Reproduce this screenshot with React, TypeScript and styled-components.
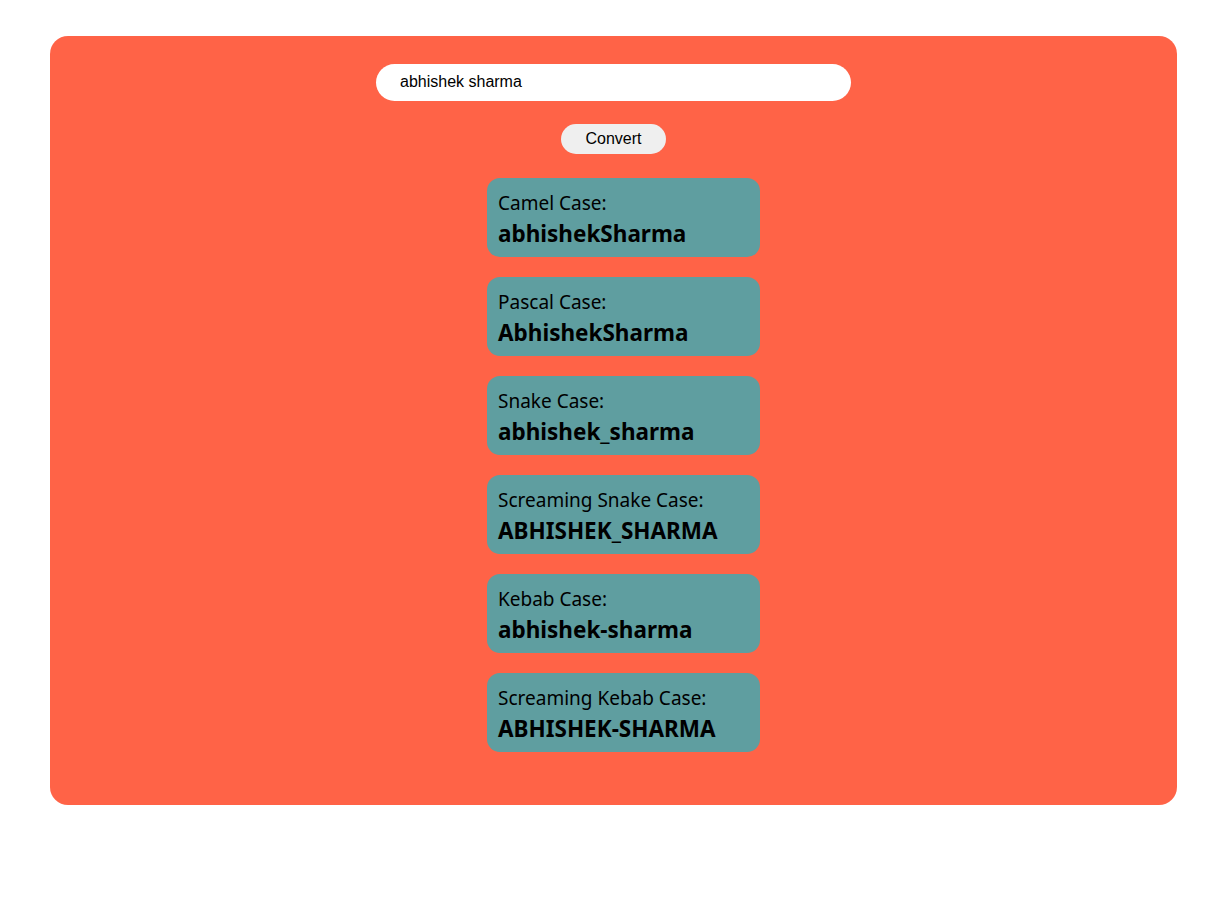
import React, { useState } from "react";
import styled, { createGlobalStyle } from "styled-components";

const Global = createGlobalStyle`
  html, body { margin: 0; padding: 0; background: #ffffff; }
  body { font-family: "Noto Sans", "Open Sans", sans-serif; }
`;

const Panel = styled.div`
  margin: 36px 48px 0 50px;
  background: #ff6347;
  border-radius: 18px;
  padding: 28px 0 53px;
  display: flex;
  flex-direction: column;
  align-items: center;
`;

const Input = styled.input`
  width: 475px;
  height: 37px;
  box-sizing: border-box;
  border: none;
  border-radius: 19px;
  padding: 0 24px 2px;
  font-family: "Liberation Sans", Arial, sans-serif;
  font-size: 16px;
  color: #000;
  background: #fff;
  outline: none;
`;

const Button = styled.button`
  margin-top: 23px;
  width: 105px;
  height: 30px;
  border: none;
  border-radius: 15px;
  background: #efefef;
  font-family: "Liberation Sans", Arial, sans-serif;
  font-size: 16px;
  color: #000;
  cursor: pointer;
`;

const Cards = styled.div`
  margin-top: 24px;
  margin-left: 20px;
  display: flex;
  flex-direction: column;
  gap: 20px;
`;

const Card = styled.div`
  width: 273px;
  height: 79px;
  box-sizing: border-box;
  background: #5f9ea0;
  border-radius: 13px;
  padding: 12px 11px;
  display: flex;
  flex-direction: column;
  color: #000;
`;

const Label = styled.span`
  font-size: 19px;
  line-height: 26px;
`;

const Value = styled.span`
  font-size: 22.5px;
  font-weight: 700;
  line-height: 30px;
  margin-top: 3px;
`;

const words = (s: string) => s.trim().split(/\s+/).filter(Boolean);
const cap = (w: string) => w.charAt(0).toUpperCase() + w.slice(1).toLowerCase();

export default function App() {
  const [text, setText] = useState("abhishek sharma");
  const [src, setSrc] = useState("abhishek sharma");
  const w = words(src).map((x) => x.toLowerCase());
  const results: [string, string][] = [
    ["Camel Case:", w.map((x, i) => (i === 0 ? x : cap(x))).join("")],
    ["Pascal Case:", w.map(cap).join("")],
    ["Snake Case:", w.join("_")],
    ["Screaming Snake Case:", w.join("_").toUpperCase()],
    ["Kebab Case:", w.join("-")],
    ["Screaming Kebab Case:", w.join("-").toUpperCase()],
  ];
  return (
    <>
      <Global />
      <Panel>
        <Input value={text} onChange={(e) => setText(e.target.value)} />
        <Button onClick={() => setSrc(text)}>Convert</Button>
        <Cards>
          {results.map(([l, v]) => (
            <Card key={l}>
              <Label>{l}</Label>
              <Value>{v}</Value>
            </Card>
          ))}
        </Cards>
      </Panel>
    </>
  );
}
